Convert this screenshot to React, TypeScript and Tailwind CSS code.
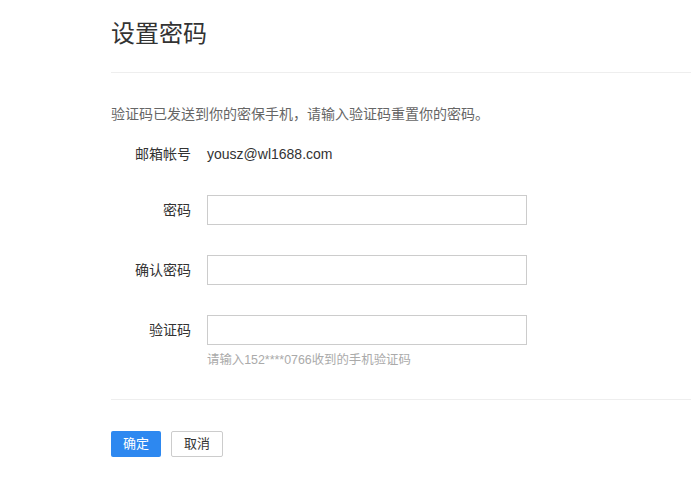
const font = "font-['Liberation_Sans','Noto_Sans_CJK_SC',sans-serif]";

function Field({ label, hint }: { label: string; hint?: string }) {
  return (
    <div className="flex items-start">
      <label className="w-[96px] shrink-0 pr-[16px] text-right text-[14px] leading-[30px] text-[#333]">
        {label}
      </label>
      <div className="flex flex-col">
        <input
          type="text"
          className="h-[30px] w-[320px] border border-[#ccc] bg-white px-2 text-[14px] outline-none"
        />
        {hint && (
          <p className="mt-[6px] text-[12.4px] leading-[18px] text-[#aaa]">{hint}</p>
        )}
      </div>
    </div>
  );
}

export default function App() {
  return (
    <div className={`${font} min-h-[482px] w-[691px] bg-white pl-[111px]`}>
      <div className="border-b border-[#eee] pt-4 pb-5">
        <h1 className="text-[24px] leading-[36px] text-[#333]">设置密码</h1>
      </div>

      <p className="mt-[31px] text-[14px] leading-[20px] text-[#666]">
        验证码已发送到你的密保手机，请输入验证码重置你的密码。
      </p>

      <div className="mt-[20px] flex items-center">
        <span className="w-[96px] shrink-0 pr-[16px] text-right text-[14px] leading-[20px] text-[#333]">
          邮箱帐号
        </span>
        <span className="text-[14px] leading-[20px] text-[#333]">yousz@wl1688.com</span>
      </div>

      <div className="mt-[31px] flex flex-col gap-[30px]">
        <Field label="密码" />
        <Field label="确认密码" />
        <Field label="验证码" hint="请输入152****0766收到的手机验证码" />
      </div>

      <div className="mt-[30px] border-t border-[#eee]" />

      <div className="mt-[31px] flex gap-[10px]">
        <button className="h-[26px] w-[50px] rounded-[2px] bg-[#2d88f0] text-[13px] text-white">
          确定
        </button>
        <button className="h-[26px] w-[52px] rounded-[2px] border border-[#ccc] bg-white text-[13px] text-[#333]">
          取消
        </button>
      </div>
    </div>
  );
}
